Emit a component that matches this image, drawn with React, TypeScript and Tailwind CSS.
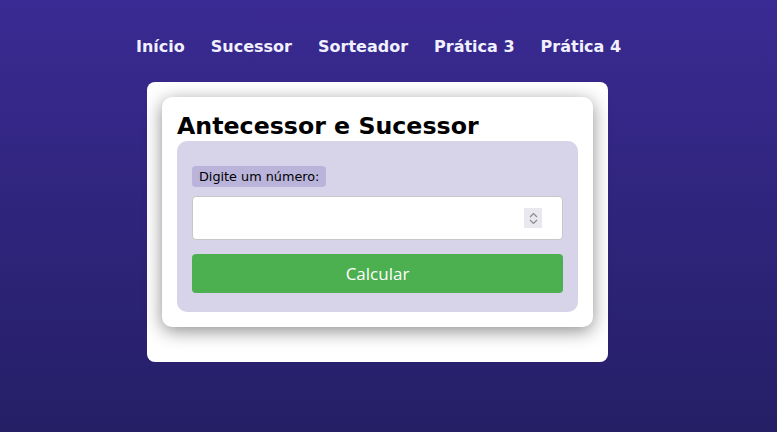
import React from "react";

export default function App() {
  const links = ["Início", "Sucessor", "Sorteador", "Prática 3", "Prática 4"];
  return (
    <div className="w-[777px] h-[432px] overflow-hidden bg-gradient-to-b from-[#3a2a93] to-[#251f66] font-['DejaVu_Sans',sans-serif]">
      <nav className="flex gap-[26px] pl-[136px] pt-[37px] h-[82px]">
        {links.map((l) => (
          <a key={l} className="text-[16px] leading-[20px] font-bold text-[#f0f0ff] h-[20px]">
            {l}
          </a>
        ))}
      </nav>
      <div className="ml-[147px] w-[461px] bg-white rounded-[8px] pt-[15px] pb-[35px] px-[15px]">
        <div className="bg-white rounded-[10px] p-[15px] pt-[14px] shadow-[0_4px_18px_rgba(0,0,0,0.45)]">
          <h1 className="text-[23.7px] leading-[30px] font-bold text-black">Antecessor e Sucessor</h1>
          <div className="bg-[#d7d3e8] rounded-[10px] px-[15px] pt-[25px] pb-[19px]">
            <div className="w-fit bg-[#bab4da] rounded-[4px] px-[7px] h-[21px] text-[12.8px] leading-[21px] text-black">
              Digite um número:
            </div>
            <div className="mt-[9px] h-[44px] bg-white border border-[#c8c8c8] rounded-[4px] flex items-center justify-end pr-[20px]">
              <div className="w-[18px] h-[20px] bg-[#e8e8ee] flex flex-col items-center justify-center gap-[1px]">
                <svg width="9" height="6" viewBox="0 0 9 6">
                  <path d="M1 5 L4.5 1.5 L8 5" stroke="#8a8a8a" strokeWidth="1.2" fill="none" />
                </svg>
                <svg width="9" height="6" viewBox="0 0 9 6">
                  <path d="M1 1 L4.5 4.5 L8 1" stroke="#8a8a8a" strokeWidth="1.2" fill="none" />
                </svg>
              </div>
            </div>
            <button className="block mt-[14px] w-full h-[39px] bg-[#4caf50] rounded-[4px] text-white text-[17px] font-['Open_Sans',sans-serif]">
              Calcular
            </button>
          </div>
        </div>
      </div>
    </div>
  );
}
